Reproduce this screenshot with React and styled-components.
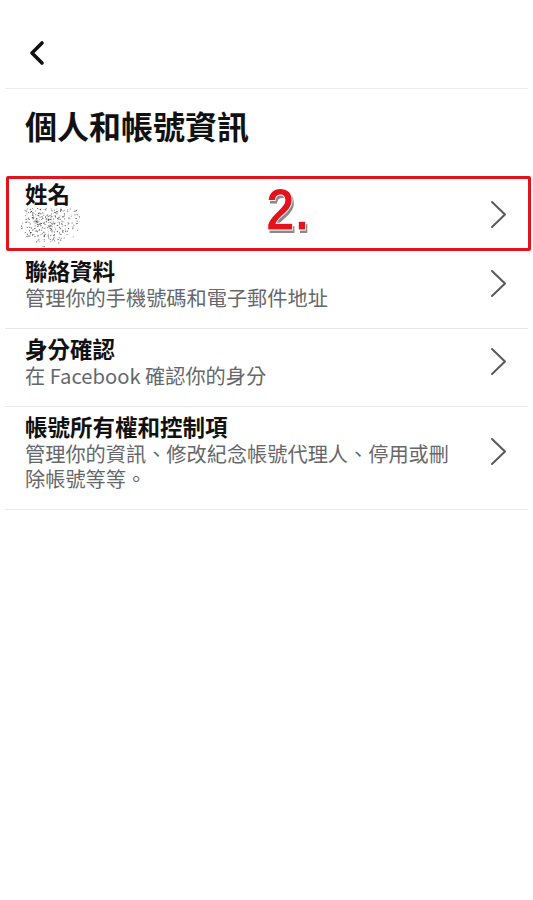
import React from 'react'
import styled, { createGlobalStyle } from 'styled-components'

const GlobalStyle = createGlobalStyle`
  html, body {
    margin: 0;
    padding: 0;
    background: #fff;
  }
  body {
    font-family: "Noto Sans CJK TC", "Noto Sans", sans-serif;
    color: #1c1e21;
  }
`

const Page = styled.div`
  width: 533px;
  min-height: 900px;
  background: #fff;
`

const Header = styled.div`
  height: 70px;
  margin: 0 5px;
  padding: 18px 0 0 22px;
  border-bottom: 1px solid #ececec;
  display: flex;
  align-items: center;
`

const BackButton = styled.button`
  border: none;
  background: none;
  padding: 0;
  width: 24px;
  height: 30px;
  display: flex;
  align-items: center;
  cursor: pointer;
`

const Title = styled.h1`
  margin: 0;
  padding: 14px 25px 28px;
  font-size: 32px;
  line-height: 45px;
  font-weight: 700;
  color: #111;
`

const List = styled.div`
  margin: 0 5px;
`

const Row = styled.div`
  position: relative;
  display: flex;
  align-items: center;
  padding: ${p => (p.$marked ? '1px 0 0 16px' : '5px 0 18px 20px')};
  border-bottom: 1px solid #e8e8e8;
  ${p =>
    p.$marked &&
    `
    border: 3px solid #e3121b;
    border-radius: 2px;
    margin: 0 -3px 0 1px;
    height: 68px;
  `}
`

const RowText = styled.div`
  flex: 1;
  padding-right: 36px;
`

const RowTitle = styled.div`
  font-size: 22.5px;
  line-height: 29px;
  font-weight: 700;
  color: #111;
`

const RowSub = styled.div`
  font-size: 20.2px;
  line-height: 25px;
  color: #65676b;
`

const ChevronBox = styled.div`
  width: 38px;
  display: flex;
  align-items: center;
`

const Step = styled.span`
  position: absolute;
  left: 257px;
  top: 1px;
  font-family: "Liberation Sans", sans-serif;
  font-size: 60px;
  line-height: 60px;
  font-weight: 700;
  color: #e3121b;
  -webkit-text-stroke: 1px #fff;
  text-shadow: 2px 3px 0 #8a8a8a;
  transform: scaleX(0.86);
  transform-origin: left center;
`

const Blur = styled.svg`
  display: block;
  margin-left: -10px;
`

const BackIcon = () => (
  <svg width="20" height="26" viewBox="0 0 20 26">
    <polyline points="15,3 5,13 15,23" fill="none" stroke="#111" strokeWidth="3.6" strokeLinecap="round" strokeLinejoin="round" />
  </svg>
)

const ChevronIcon = () => (
  <svg width="17" height="29" viewBox="0 0 17 29">
    <polyline points="2,2 15,14.5 2,27" fill="none" stroke="#595959" strokeWidth="2" strokeLinecap="round" strokeLinejoin="round" />
  </svg>
)

// scrambled name, drawn as speckles
const speckles = (() => {
  let s = 11
  const rnd = () => {
    s = (s * 16807) % 2147483647
    return s / 2147483647
  }
  const dots = []
  for (let i = 0; i < 2600; i++) {
    const x = rnd() * 78
    const y = rnd() * 42
    const dx = (x - 34) / 42
    const dy = (y - 10) / 38
    const d = dx * dx + dy * dy
    if (rnd() > 0.7 + d * 0.5) {
      const g = Math.floor(40 + rnd() * 140)
      dots.push({ x, y, c: `rgb(${g},${g},${g})` })
    }
  }
  return dots
})()

const ScrambledName = () => (
  <Blur width="78" height="42" viewBox="0 0 78 42">
    {speckles.map((d, i) => (
      <rect key={i} x={d.x.toFixed(1)} y={d.y.toFixed(1)} width="1" height="1" fill={d.c} />
    ))}
  </Blur>
)

const items = [
  { title: '聯絡資料', sub: '管理你的手機號碼和電子郵件地址' },
  { title: '身分確認', sub: '在 Facebook 確認你的身分' },
  { title: '帳號所有權和控制項', sub: '管理你的資訊、修改紀念帳號代理人、停用或刪除帳號等等。' },
]

const App = () => {
  return (
    <Page>
      <GlobalStyle />
      <Header>
        <BackButton>
          <BackIcon />
        </BackButton>
      </Header>
      <Title>個人和帳號資訊</Title>
      <List>
        <Row $marked>
          <RowText>
            <RowTitle>姓名</RowTitle>
            <ScrambledName />
          </RowText>
          <ChevronBox>
            <ChevronIcon />
          </ChevronBox>
          <Step>2.</Step>
        </Row>
        {items.map(item => (
          <Row key={item.title}>
            <RowText>
              <RowTitle>{item.title}</RowTitle>
              <RowSub>{item.sub}</RowSub>
            </RowText>
            <ChevronBox>
              <ChevronIcon />
            </ChevronBox>
          </Row>
        ))}
      </List>
    </Page>
  )
}

export default App
